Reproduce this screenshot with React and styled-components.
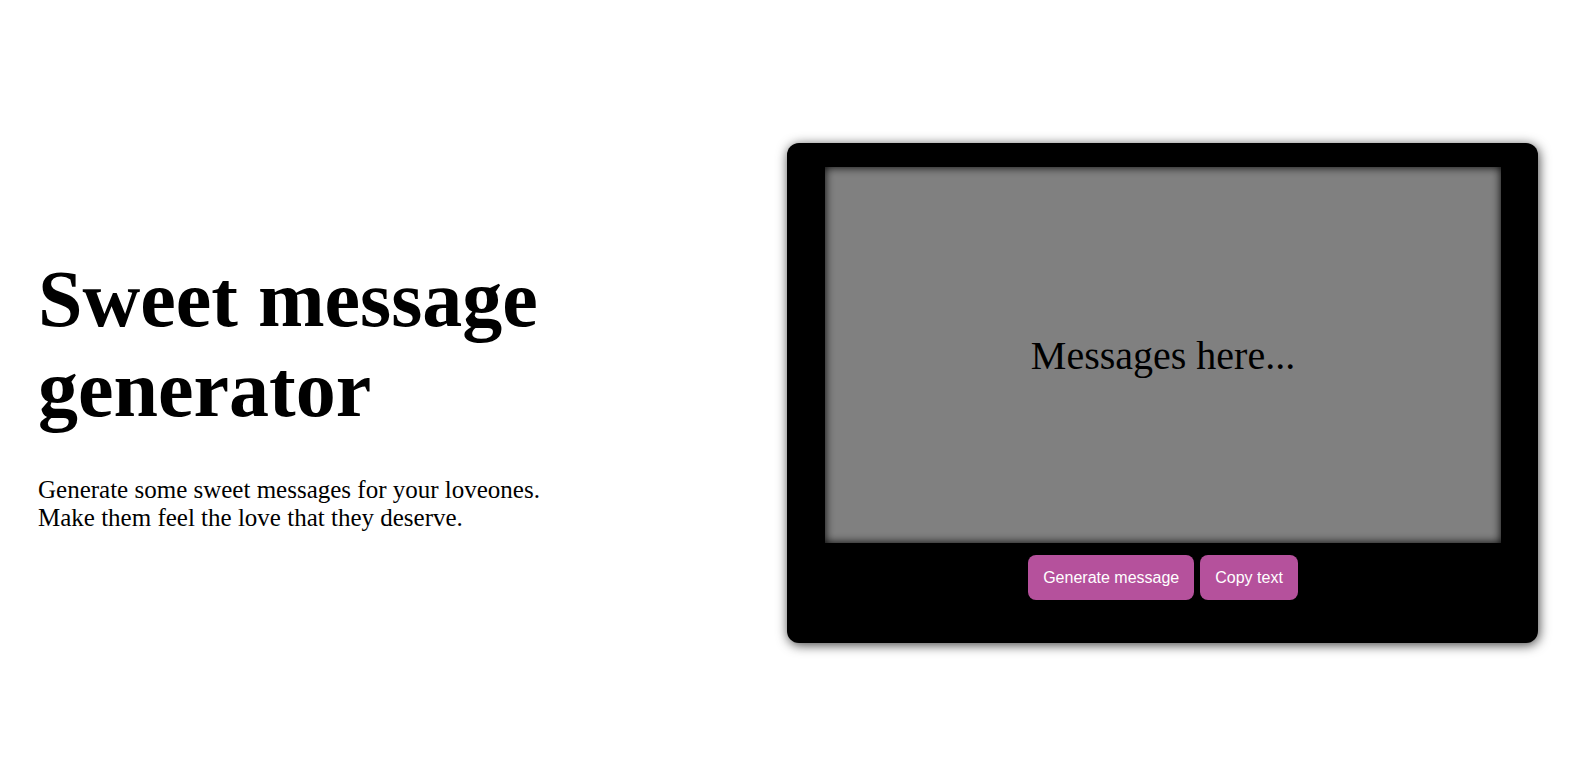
import React, { useState } from "react";
import styled, { createGlobalStyle } from "styled-components";

const GlobalStyle = createGlobalStyle`
  body {
    margin: 0;
    background: #fff;
    font-family: "Liberation Serif", "Times New Roman", serif;
  }
`;

const Page = styled.main`
  display: flex;
  align-items: center;
  justify-content: space-between;
  box-sizing: border-box;
  height: 757px;
  padding: 29px 57px 0 38px;
`;

const Intro = styled.section`
  width: 580px;
`;

const Title = styled.h1`
  margin: 0 0 42px;
  font-size: 80px;
  line-height: 90px;
  font-weight: bold;
  color: #000;
`;

const Lead = styled.p`
  margin: 0;
  font-size: 25px;
  line-height: 28px;
  color: #000;
`;

const Card = styled.section`
  display: flex;
  flex-direction: column;
  align-items: center;
  box-sizing: border-box;
  width: 751px;
  height: 500px;
  padding: 24px 37px 0 38px;
  background: #000;
  border-radius: 12px;
  box-shadow: 1px 2px 12px rgba(0, 0, 0, 0.75);
`;

const Screen = styled.div`
  display: flex;
  align-items: center;
  justify-content: center;
  width: 100%;
  height: 376px;
  background: #808080;
  box-shadow: inset 0 0 10px #000;
  font-size: 40px;
  color: #000;
`;

const Actions = styled.div`
  display: flex;
  gap: 6px;
  margin-top: 12px;
`;

const Button = styled.button`
  height: 45px;
  padding: 0 15px;
  border: 0;
  border-radius: 8px;
  background: #b5519c;
  color: #fff;
  font-family: "Liberation Sans", Arial, sans-serif;
  font-size: 16px;
  cursor: pointer;

  &:hover {
    background: #a0458a;
  }
`;

const messages = [
  "You make every day brighter.",
  "My heart is always with you.",
  "Thank you for being you.",
];

export default function App() {
  const [message, setMessage] = useState("Messages here...");

  const generate = () => {
    setMessage(messages[Math.floor(Math.random() * messages.length)]);
  };

  const copy = () => {
    navigator.clipboard?.writeText(message);
  };

  return (
    <>
      <GlobalStyle />
      <Page>
        <Intro>
          <Title>Sweet message generator</Title>
          <Lead>
            Generate some sweet messages for your loveones.
            <br />
            Make them feel the love that they deserve.
          </Lead>
        </Intro>
        <Card>
          <Screen>{message}</Screen>
          <Actions>
            <Button onClick={generate}>Generate message</Button>
            <Button onClick={copy}>Copy text</Button>
          </Actions>
        </Card>
      </Page>
    </>
  );
}
